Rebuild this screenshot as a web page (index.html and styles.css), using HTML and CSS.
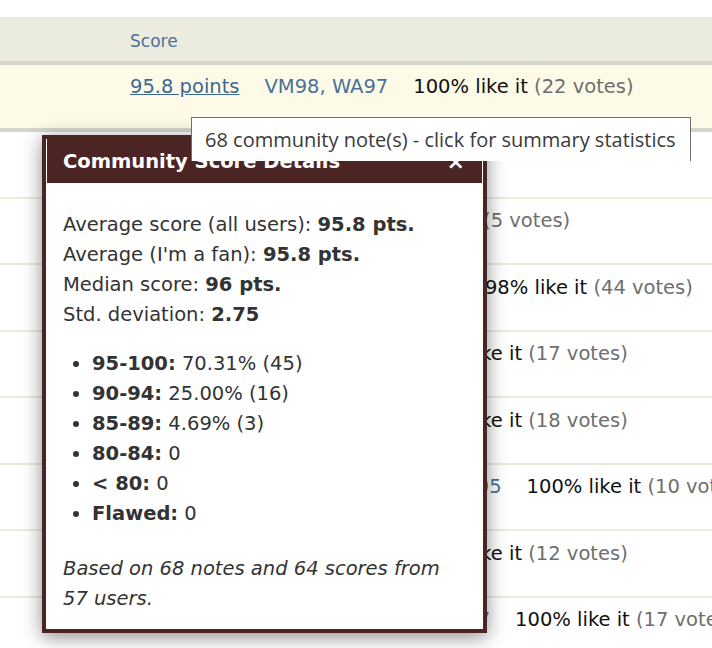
FILE: index.html
```html
<!DOCTYPE html>
<html lang="en">
<head>
    <meta charset="UTF-8">
    <meta name="viewport" content="width=device-width, initial-scale=1.0">
    <link rel="stylesheet" href="styles.css">
    <title>Community Scores</title>
</head>
<body>

<div class="scores">
    <div class="scores-head">Score</div>

    <div class="score-row current">
        <a class="points" href="#">95.8 points</a>
        <span class="critics">VM98, WA97</span>
        <span class="likes">100% like it <span class="votes">(22 votes)</span></span>
    </div>
    <div class="score-row">
        <a class="points" href="#">94.1 points</a>
        <span class="likes">100% like it <span class="votes">(2 votes)</span></span>
    </div>
    <div class="score-row">
        <a class="points" href="#">93.4 points</a>
        <span class="critics">WA93+</span>
        <span class="likes">100% like it <span class="votes">(5 votes)</span></span>
    </div>
    <div class="score-row">
        <a class="points" href="#">95.2 points</a>
        <span class="critics">VM96, WA95+, JS96</span>
        <span class="likes">98% like it <span class="votes">(44 votes)</span></span>
    </div>
    <div class="score-row">
        <a class="points" href="#">94.6 points</a>
        <span class="critics">WA94, ST93</span>
        <span class="likes">100% like it <span class="votes">(17 votes)</span></span>
    </div>
    <div class="score-row">
        <a class="points" href="#">94.9 points</a>
        <span class="critics">WA95, ST94</span>
        <span class="likes">100% like it <span class="votes">(18 votes)</span></span>
    </div>
    <div class="score-row">
        <a class="points" href="#">95.5 points</a>
        <span class="critics">VM96, WA95, JS96, JD95</span>
        <span class="likes">100% like it <span class="votes">(10 votes)</span></span>
    </div>
    <div class="score-row">
        <a class="points" href="#">93.8 points</a>
        <span class="critics">WA94, ST92</span>
        <span class="likes">100% like it <span class="votes">(12 votes)</span></span>
    </div>
    <div class="score-row">
        <a class="points" href="#">96.1 points</a>
        <span class="critics">WA97, WE96+, W&amp;S97</span>
        <span class="likes">100% like it <span class="votes">(17 votes)</span></span>
    </div>
</div>

<div class="popup">
    <div class="popup-title">
        <span>Community Score Details</span>
        <span class="popup-close">&times;</span>
    </div>
    <div class="popup-body">
        <p>
            Average score (all users): <b>95.8 pts.</b><br>
            Average (I'm a fan): <b>95.8 pts.</b><br>
            Median score: <b>96 pts.</b><br>
            Std. deviation: <b>2.75</b>
        </p>
        <ul>
            <li><b>95-100:</b> 70.31% (45)</li>
            <li><b>90-94:</b> 25.00% (16)</li>
            <li><b>85-89:</b> 4.69% (3)</li>
            <li><b>80-84:</b> 0</li>
            <li><b>&lt; 80:</b> 0</li>
            <li><b>Flawed:</b> 0</li>
        </ul>
        <p class="popup-note">Based on 68 notes and 64 scores from 57 users.</p>
    </div>
</div>

<div class="tip">68 community note(s) - click for summary statistics</div>

</body>
</html>
```

FILE: styles.css
```css
body {
    font-family: "DejaVu Sans", Verdana, sans-serif;
    font-size: 19.5px;
    margin: 0;
    padding-top: 17px;
    background: #fff;
    color: #111;
}

.scores-head {
    height: 48px;
    box-sizing: border-box;
    padding: 13px 0 0 130px;
    font-size: 17px;
    line-height: 22px;
    color: #4c7097;
    background: #ecebe0;
    border-bottom: 4px solid #d6d5cc;
}

.score-row {
    display: flex;
    gap: 25px;
    height: 66.5px;
    box-sizing: border-box;
    padding: 10.5px 0 0 130px;
    line-height: 24px;
    white-space: nowrap;
    border-bottom: 2px solid #ecebe0;
}

.score-row.current {
    height: 67px;
    padding-top: 10px;
    background: #fdfbe7;
    border-bottom: 4px solid #d6d5cc;
}

.points {
    color: #3d6892;
}

.critics {
    color: #4a7199;
}

.likes {
    color: #111;
}

.votes {
    color: #6e6e6e;
}

/* details box opened from the score link */
.popup {
    position: absolute;
    left: 42px;
    top: 135px;
    width: 445px;
    height: 498px;
    box-sizing: border-box;
    padding: 0 1px 1px;
    background: #fff;
    border: 4px solid #4a2523;
    box-shadow: 0 4px 18px rgba(0, 0, 0, 0.45);
    color: #333;
}

.popup-title {
    display: flex;
    justify-content: space-between;
    height: 44px;
    box-sizing: border-box;
    padding: 8px 17px 0 16px;
    background: #4a2523;
    color: #fff;
    font-weight: bold;
    line-height: 30px;
}

.popup-close {
    font-size: 22px;
}

.popup-body {
    padding: 27px 20px 15px 16px;
    line-height: 30px;
}

.popup-body p {
    margin: 0;
}

.popup-body ul {
    margin: 19px 0 25px;
    padding-left: 29px;
}

.popup-note {
    font-style: italic;
}

.tip {
    position: absolute;
    left: 191px;
    top: 117px;
    width: 500px;
    height: 44px;
    box-sizing: border-box;
    padding: 8px 0 0 13px;
    background: #fff;
    border: 1px solid #6f6f6f;
    border-bottom: none;
    font-family: "Open Sans", "Noto Sans", sans-serif;
    font-size: 20px;
    line-height: 28px;
    color: #3a3a3a;
}
```
